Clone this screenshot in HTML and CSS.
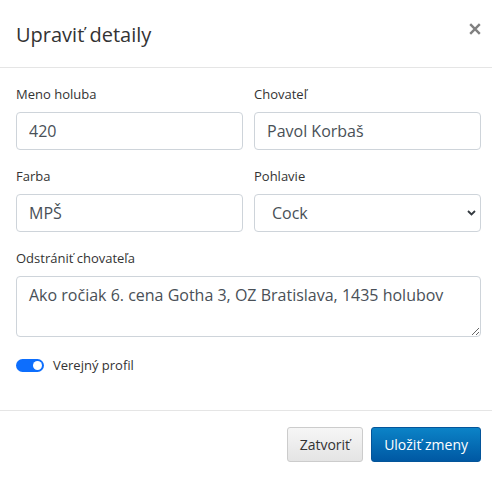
FILE: index.html
```html
<!DOCTYPE html>
<html lang="sk">
<head>
<meta charset="utf-8">
<title>Upraviť detaily</title>
<link rel="stylesheet" href="styles.css">
</head>
<body>
<div class="modal">
  <div class="modal-header">
    <h5 class="modal-title">Upraviť detaily</h5>
    <button class="close" type="button" aria-label="Close">
      <svg width="12" height="12" viewBox="0 0 12 12"><path d="M1.2 1.2 L10.8 10.8 M10.8 1.2 L1.2 10.8" stroke="#808080" stroke-width="2.4" stroke-linecap="butt"/></svg>
    </button>
  </div>
  <div class="modal-body">
    <div class="form-row">
      <div class="form-group">
        <label class="form-label">Meno holuba</label>
        <input class="form-control" type="text" value="420">
      </div>
      <div class="form-group">
        <label class="form-label">Chovateľ</label>
        <input class="form-control" type="text" value="Pavol Korbaš">
      </div>
    </div>
    <div class="form-row">
      <div class="form-group">
        <label class="form-label">Farba</label>
        <input class="form-control" type="text" value="MPŠ">
      </div>
      <div class="form-group">
        <label class="form-label">Pohlavie</label>
        <div class="select-wrap">
          <select class="form-control form-select">
            <option>Cock</option>
            <option>Hen</option>
          </select>
          <svg class="select-arrow" width="9" height="6" viewBox="0 0 9 6"><path d="M1 1 L4.5 4.5 L8 1" fill="none" stroke="#343a40" stroke-width="1.8"/></svg>
        </div>
      </div>
    </div>
    <div class="form-group">
      <label class="form-label">Odstrániť chovateľa</label>
      <textarea class="form-control textarea" rows="2">Ako ročiak 6. cena Gotha 3, OZ Bratislava, 1435 holubov</textarea>
    </div>
    <div class="switch-row">
      <span class="switch"><span class="knob"></span></span>
      <span class="switch-label">Verejný profil</span>
    </div>
  </div>
  <div class="modal-footer">
    <button class="btn btn-secondary" type="button">Zatvoriť</button>
    <button class="btn btn-primary" type="button">Uložiť zmeny</button>
  </div>
</div>
</body>
</html>
```
FILE: styles.css
```css
* { box-sizing: border-box; }

html, body {
  margin: 0;
  padding: 0;
  background: #ffffff;
}

body {
  font-family: "Open Sans", "DejaVu Sans", sans-serif;
  color: #333333;
  width: 492px;
}

.modal {
  background: #ffffff;
}

.modal-header {
  display: flex;
  justify-content: space-between;
  align-items: flex-start;
  padding: 20px 11px 17px 16px;
  border-bottom: 1px solid #e5e5e5;
}

.modal-title {
  margin: 0;
  font-size: 20px;
  line-height: 30px;
  font-weight: 400;
  color: #333333;
}

.close {
  border: 0;
  background: transparent;
  padding: 0;
  margin-top: 3px;
  width: 12px;
  height: 12px;
  line-height: 0;
  cursor: pointer;
}

.modal-body {
  padding: 16px 11px 17px 16px;
}

.form-row {
  display: grid;
  grid-template-columns: 1fr 1fr;
  column-gap: 11px;
}

.form-group {
  margin-bottom: 16px;
}

.form-label {
  display: block;
  font-size: 13px;
  line-height: 20px;
  margin-bottom: 8px;
  color: #333333;
}

.form-control {
  display: block;
  width: 100%;
  height: 38px;
  padding: 6px 12px;
  font-family: "Open Sans", "DejaVu Sans", sans-serif;
  font-size: 16px;
  line-height: 24px;
  color: #495057;
  background: #ffffff;
  border: 1px solid #ced4da;
  border-radius: 4px;
  margin: 0;
}

.select-wrap {
  position: relative;
}

.form-select {
  appearance: none;
  -webkit-appearance: none;
  padding-left: 17px;
}

.select-arrow {
  position: absolute;
  right: 5px;
  top: 16px;
  pointer-events: none;
}

.textarea {
  height: 61px;
  resize: vertical;
}

.switch-row {
  display: flex;
  align-items: center;
  gap: 9px;
  height: 24px;
  margin-bottom: 16px;
}

.switch {
  position: relative;
  display: inline-block;
  width: 28px;
  height: 13px;
  border-radius: 7px;
  background: #0d6efd;
}

.knob {
  position: absolute;
  top: 2px;
  right: 2px;
  width: 9px;
  height: 9px;
  border-radius: 50%;
  background: #ffffff;
}

.switch-label {
  font-size: 13px;
  line-height: 20px;
  color: #333333;
}

.modal-footer {
  display: flex;
  justify-content: flex-end;
  gap: 8px;
  padding: 16px 11px 16px 16px;
  border-top: 1px solid #e5e5e5;
}

.btn {
  height: 35px;
  padding: 6px 12px;
  font-family: "Open Sans", "DejaVu Sans", sans-serif;
  font-size: 14px;
  line-height: 21px;
  border-radius: 3px;
  cursor: pointer;
}

.btn-secondary {
  color: #333333;
  background: linear-gradient(#f6f6f6, #e4e4e4);
  border: 1px solid #cccccc;
}

.btn-primary {
  color: #ffffff;
  background: linear-gradient(#0b83c7, #0058a3);
  border: 1px solid #04559a;
}
```
